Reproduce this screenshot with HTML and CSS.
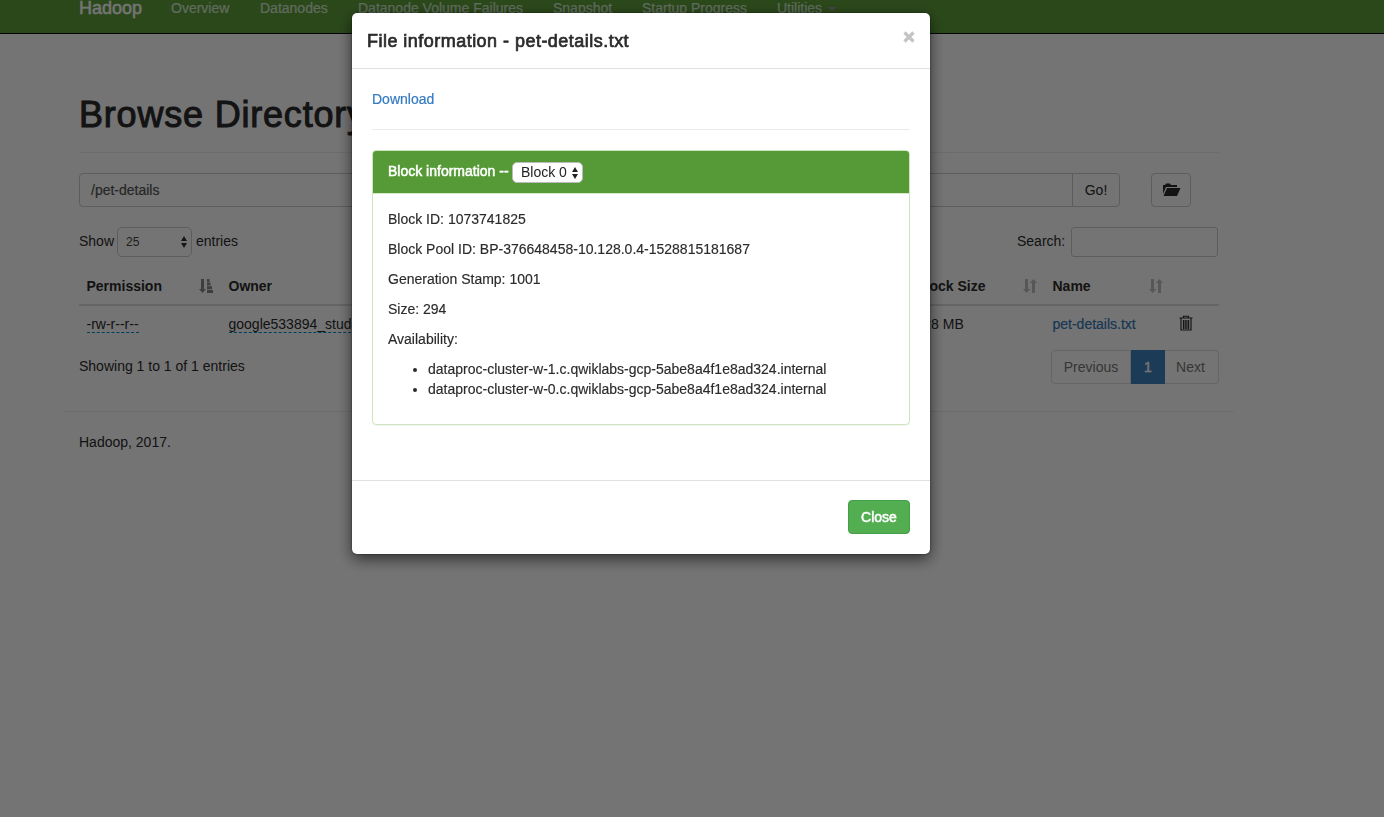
FILE: index.html
```html
<!DOCTYPE html>
<html lang="en">
<head>
<meta charset="utf-8">
<title>Browsing HDFS</title>
<link rel="stylesheet" href="styles.css">
</head>
<body>
<svg width="0" height="0" class="defs">
  <symbol id="arrows" viewBox="0 0 14 14"><path d="M2 0h3v10h2.500L3.500 14 0 10h2zM9 14h3V4h2L10.500 0 6.800 4H9z" fill="currentColor"/></symbol>
  <symbol id="updown" viewBox="0 0 6 12"><path d="M3 0l3 5H0zM3 12l3-5H0z" fill="currentColor"/></symbol>
</svg>
<nav class="navbar">
  <a class="brand">Hadoop</a>
  <a class="nav-overview">Overview</a>
  <a class="nav-datanodes">Datanodes</a>
  <a class="nav-failures">Datanode Volume Failures</a>
  <a class="nav-snapshot">Snapshot</a>
  <a class="nav-startup">Startup Progress</a>
  <a class="nav-utilities">Utilities<i class="caret"></i></a>
</nav>
<main class="container">
  <header class="page-header"><h1>Browse Directory</h1></header>
  <div class="path-row">
    <div class="path">/pet-details</div>
    <div class="go">Go!</div>
    <div class="folder"><svg width="19" height="14" viewBox="0 0 19 14"><path d="M1 11V2h2l1-1.500h4L9 2h6v2H4z" fill="currentColor"/><path d="M5 5h13.500L15 13H1.500z" fill="currentColor"/></svg></div>
  </div>
  <div class="tools">
    <span class="show">Show</span>
    <div class="length"><span>25</span><svg width="6" height="12"><use href="#updown"/></svg></div>
    <span class="entries">entries</span>
    <span class="search-label">Search:</span>
    <div class="search"></div>
  </div>
  <div class="table">
    <div class="tr head">
      <div><span>Permission</span><svg class="sorted" width="14" height="14" viewBox="0 0 14 14"><path d="M2 0h3v10h2L3.500 14 0 10h2zM8 0h2.500v3H8zM8 3.600h3.500v3H8zM8 7.300h5v3H8zM8 11h6.500v3H8z" fill="currentColor"/></svg></div>
      <div><span>Owner</span></div>
      <div class="size-col"><span>Block Size</span><svg class="unsorted" width="14" height="14"><use href="#arrows"/></svg></div>
      <div><span>Name</span><svg class="unsorted" width="14" height="14"><use href="#arrows"/></svg></div>
      <div></div>
    </div>
    <div class="tr row">
      <div><span class="editable">-rw-r--r--</span></div>
      <div><span class="editable">google533894_student</span></div>
      <div class="size-col"><span>128 MB</span></div>
      <div><a class="link">pet-details.txt</a></div>
      <div><svg class="trash" width="14" height="16" viewBox="0 0 14 16" fill="none" stroke="currentColor"><path d="M.5 3h13M4.500 3V1.200h5V3M2 3.500v11.500h10V3.500M4.500 5v9M6.200 5v9M7.900 5v9M9.600 5v9" stroke-width="1.150"/></svg></div>
    </div>
  </div>
  <div class="bottom">
    <span class="info">Showing 1 to 1 of 1 entries</span>
    <div class="pager"><span class="prev">Previous</span><span class="current">1</span><span class="next">Next</span></div>
  </div>
  <footer>Hadoop, 2017.</footer>
</main>
<div class="backdrop">
  <section class="modal">
    <div class="modal-header">
      <h4>File information - pet-details.txt</h4>
      <svg class="dismiss" width="12" height="12" viewBox="0 0 12 12"><path d="M1.500 1.500l9 9M10.500 1.500l-9 9" stroke="#c4c4c4" stroke-width="3.200"/></svg>
    </div>
    <div class="modal-body">
      <div class="download"><a>Download</a></div>
      <div class="panel">
        <div class="panel-heading"><span class="block-title">Block information --</span><div class="block-select"><span>Block 0</span><svg width="6" height="12"><use href="#updown"/></svg></div></div>
        <div class="panel-body">
          <p>Block ID: 1073741825</p>
          <p>Block Pool ID: BP-376648458-10.128.0.4-1528815181687</p>
          <p>Generation Stamp: 1001</p>
          <p>Size: 294</p>
          <p>Availability:</p>
          <ul>
            <li>dataproc-cluster-w-1.c.qwiklabs-gcp-5abe8a4f1e8ad324.internal</li>
            <li>dataproc-cluster-w-0.c.qwiklabs-gcp-5abe8a4f1e8ad324.internal</li>
          </ul>
        </div>
      </div>
    </div>
    <div class="modal-footer"><div class="close-btn">Close</div></div>
  </section>
</div>
</body>
</html>
```
FILE: styles.css
```css
* { box-sizing: border-box; }
html, body { height: 100%; }
body { margin: 0; overflow: hidden; background: #fff; color: #2b2b2b; font: 14px/20px "Liberation Sans", Arial, sans-serif; }
h1, h4, p, ul { margin: 0; }
span, a { white-space: nowrap; }
.defs { position: absolute; }

.navbar { display: flex; align-items: center; gap: 30px; height: 51px; margin-top: -17px; padding-left: 79px; background: #5f9f3b; border-bottom: 1px solid #080808; color: #d6ead0; -webkit-text-stroke: .2px; }
.navbar a { display: block; }
.navbar .brand { width: 62px; font-size: 18px; color: #fff; -webkit-text-stroke: .5px; }
.nav-overview { width: 59px; }
.nav-datanodes { width: 68px; }
.nav-failures { width: 165px; }
.nav-snapshot { width: 59px; }
.nav-startup { width: 105px; }
.caret { display: inline-block; margin-left: 6px; border: 4px solid transparent; border-top-color: #999; border-bottom: 0; vertical-align: middle; }

.container { width: 1170px; margin-left: 64px; padding: 60px 15px 0; }
.page-header { height: 59px; border-bottom: 1px solid #eee; }
h1 { padding-top: 1px; font-size: 36px; line-height: 40px; font-weight: 400; letter-spacing: .8px; -webkit-text-stroke: 1px; white-space: nowrap; }
.path-row { display: flex; margin-top: 20px; height: 34px; line-height: 32px; }
.path { width: 994px; padding-left: 11px; border: 1px solid #ccc; border-radius: 4px 0 0 4px; color: #555; -webkit-text-stroke: .2px; }
.go { width: 48px; margin-left: -1px; border: 1px solid #ccc; border-radius: 0 4px 4px 0; text-align: center; }
.folder { display: flex; align-items: center; justify-content: center; width: 40px; margin-left: 31px; border: 1px solid #ccc; border-radius: 4px; }
.tools { display: flex; align-items: center; height: 30px; margin-top: 20px; }
.tools > span { padding-bottom: 2px; }
.show { width: 38px; }
.length { display: flex; justify-content: space-between; align-items: center; width: 75px; height: 30px; padding: 0 4px 0 8px; border: 1px solid #ccc; border-radius: 5px; font-size: 12px; color: #444; }
.length svg { color: #333; }
.tools .entries { margin-left: 4px; }
.search-label { margin-left: auto; width: 54px; }
.search { width: 147px; height: 30px; margin-right: 1px; border: 1px solid #ccc; border-radius: 3px; }

.table { margin-top: 10px; }
.tr { display: grid; grid-template-columns: 142px 686px 138px 126px 48px; height: 37px; align-items: center; }
.tr > div { display: flex; align-items: center; justify-content: space-between; padding: 0 8px 0 7.500px; }
.tr > .size-col { padding-left: 8.500px; }
.head { height: 39px; border-bottom: 2px solid #ddd; font-weight: 700; }
.row .size-col, .row .link { padding-bottom: 2px; }
.row .trash { margin-bottom: 4px; }
.sorted { color: #888; }
.unsorted { color: #c0c0c0; }
.editable { border-bottom: 1px dashed #08c; line-height: 16px; }
.link { color: #337ab7; -webkit-text-stroke: .2px; }
.bottom { display: flex; justify-content: space-between; margin-top: 7px; height: 34px; line-height: 34px; }
.info { line-height: 32px; }
.pager { display: flex; line-height: 32px; text-align: center; color: #777; }
.pager span { border: 1px solid #ddd; }
.prev { width: 80px; border-radius: 4px 0 0 4px; }
.pager .current { width: 34px; background: #3f82bd; border-color: #3f82bd; color: #fff; -webkit-text-stroke: .4px; }
.pager .next { width: 54px; padding-right: 2px; border-left: 0; border-radius: 0 4px 4px 0; }
footer { margin: 27px -15px 0; padding: 20px 15px; border-top: 1px solid #eee; }

.backdrop { position: fixed; inset: 0; background: rgba(0, 0, 0, .545); padding: 13px 0 0 352px; }
.modal { width: 578px; height: 541px; background: #fff; border-radius: 5px; box-shadow: 0 5px 15px rgba(0, 0, 0, .6), 0 0 2px rgba(0, 0, 0, .6); }
.modal-header { display: flex; justify-content: space-between; height: 56px; padding: 15px; border-bottom: 1px solid #e1e1e1; }
h4 { padding-top: 1px; font-size: 18px; line-height: 25px; font-weight: 400; letter-spacing: .47px; -webkit-text-stroke: .7px; white-space: nowrap; }
.dismiss { margin-top: 3px; }
.modal-body { height: 411px; padding: 20px; }
.download { height: 41px; border-bottom: 1px solid #eaeaea; color: #337ac1; -webkit-text-stroke: .2px; }
.panel { height: 275px; margin-top: 20px; border: 1px solid #cfe6bd; border-radius: 4px; box-shadow: 0 1px 1px rgba(0, 0, 0, .05); }
.panel-heading { display: flex; height: 43px; padding: 10px 15px; background: #569a37; border-bottom: 1px solid #d6e9c6; border-radius: 3px 3px 0 0; color: #fff; }
.block-title { width: 124px; -webkit-text-stroke: .5px; }
.block-select { display: flex; align-items: center; justify-content: space-between; width: 71px; height: 21px; margin-top: 1px; padding: 0 4px 0 8px; background: #fff; border: 1px solid #bbb; border-radius: 5px; color: #222; }
.block-select span { padding-bottom: 2px; }
.panel-body { padding: 15px; -webkit-text-stroke: .15px; }
.panel-body p { height: 30px; white-space: nowrap; }
ul { padding-left: 40px; }
li { white-space: nowrap; }
.modal-footer { display: flex; justify-content: flex-end; height: 74px; padding: 19px 20px; border-top: 1px solid #e1e1e1; }
.close-btn { width: 62px; height: 34px; line-height: 32px; text-align: center; background: #53ae51; border: 1px solid #43a047; border-radius: 4px; color: #fff; -webkit-text-stroke: .5px; }
```
